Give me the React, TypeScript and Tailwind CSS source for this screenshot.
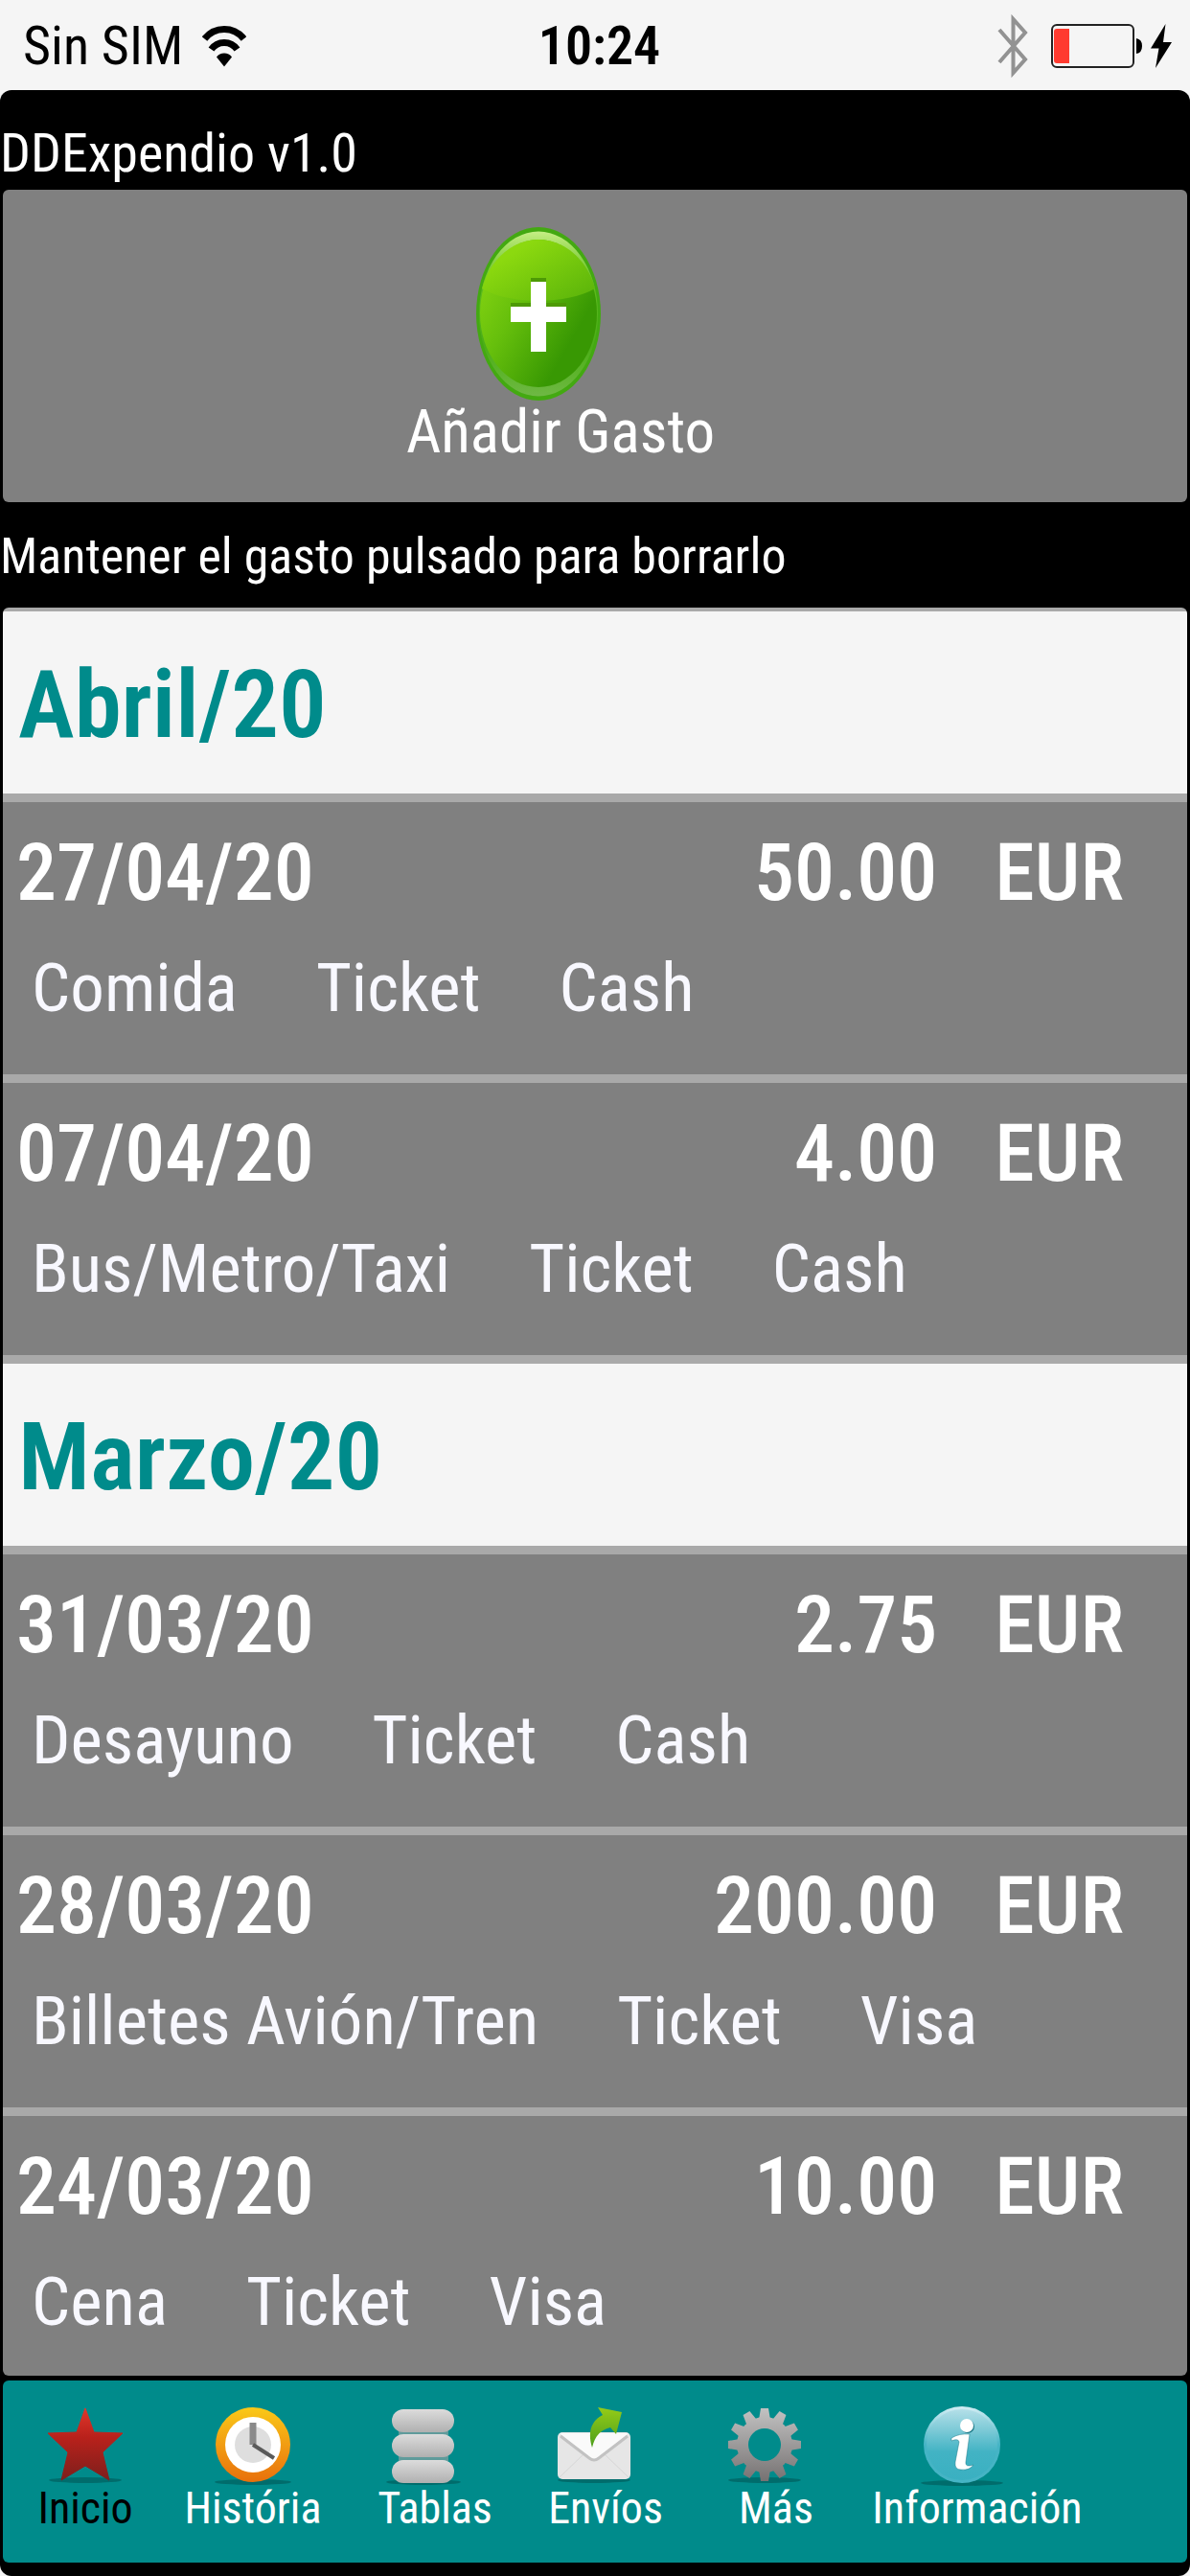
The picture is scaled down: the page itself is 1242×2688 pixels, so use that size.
import React from 'react'
import clsx from 'clsx'

type Expense = {
  date: string
  amount: string
  currency: string
  details: string[]
}

const months: { name: string; expenses: Expense[] }[] = [
  {
    name: 'Abril/20',
    expenses: [
      { date: '27/04/20', amount: '50.00', currency: 'EUR', details: ['Comida', 'Ticket', 'Cash'] },
      { date: '07/04/20', amount: '4.00', currency: 'EUR', details: ['Bus/Metro/Taxi', 'Ticket', 'Cash'] },
    ],
  },
  {
    name: 'Marzo/20',
    expenses: [
      { date: '31/03/20', amount: '2.75', currency: 'EUR', details: ['Desayuno', 'Ticket', 'Cash'] },
      { date: '28/03/20', amount: '200.00', currency: 'EUR', details: ['Billetes Avión/Tren', 'Ticket', 'Visa'] },
      { date: '24/03/20', amount: '10.00', currency: 'EUR', details: ['Cena', 'Ticket', 'Visa'] },
    ],
  },
]

const tabs = [
  { label: 'Inicio', Icon: StarIcon, active: true },
  { label: 'História', Icon: ClockIcon },
  { label: 'Tablas', Icon: DatabaseIcon, labelClass: 'pl-6' },
  { label: 'Envíos', Icon: MailIcon, labelClass: 'pl-6' },
  { label: 'Más', Icon: GearIcon, labelClass: 'pl-6' },
  { label: 'Información', Icon: InfoIcon, iconClass: 'mr-8' },
]

function WifiIcon() {
  return (
    <svg viewBox="0 0 46 44" className="h-11 w-[46px]" fill="none" stroke="#000" strokeWidth="7">
      <path d="M2.5 14.5C13 1 33 1 43.500 14.500" />
      <path d="M9.500 25.500C16 16 30 16 36.500 25.500" />
      <path d="M23 43.500L15 33.500C18.500 28 27.500 28 31 33.500Z" fill="#000" stroke="none" />
    </svg>
  )
}

function BluetoothIcon() {
  return (
    <svg viewBox="0 0 32 66" className="h-[66px] w-8" fill="none" stroke="#929292" strokeWidth="4">
      <path d="M2 16L29 47L16.500 61V5L29 19L2 50" />
    </svg>
  )
}

function BatteryIcon() {
  return (
    <svg viewBox="0 0 96 46" className="h-[46px] w-24">
      <rect x="1" y="1" width="85" height="44" rx="5" fill="none" stroke="#222" strokeWidth="2" />
      <path d="M6 5H19V41H6Q3 41 3 38V8Q3 5 6 5Z" fill="#ff3b30" />
      <path d="M89 15Q95 16 95 23T89 31Z" />
    </svg>
  )
}

function BoltIcon() {
  return (
    <svg viewBox="0 0 22 46" className="h-[46px] w-[22px]">
      <path d="M15.500 0L0 25.500H8.500L5 46L22 19H13Z" />
    </svg>
  )
}

function AddIcon() {
  return (
    <svg viewBox="0 0 130 181" className="mr-[46px] h-[181px] w-[130px]" aria-hidden="true">
      <defs>
        <linearGradient id="add-body" x1="0.100" y1="0.200" x2="0.850" y2="0.750">
          <stop offset="0" stopColor="#7fd010" />
          <stop offset="0.350" stopColor="#66bf0c" />
          <stop offset="0.900" stopColor="#389803" />
        </linearGradient>
        <linearGradient id="add-gloss" x1="0.200" y1="0.300" x2="1" y2="1">
          <stop offset="0" stopColor="#8cd90f" />
          <stop offset="1" stopColor="#58b20a" />
        </linearGradient>
        <linearGradient id="add-rim" x1="0" y1="0" x2="0" y2="1">
          <stop offset="0" stopColor="#c6ee86" />
          <stop offset="0.350" stopColor="#8ad834" stopOpacity="0.400" />
          <stop offset="0.700" stopColor="#6cbd36" stopOpacity="0.200" />
          <stop offset="1" stopColor="#6fb845" />
        </linearGradient>
      </defs>
      <ellipse cx="65" cy="90.500" rx="65" ry="90.500" fill="#43a911" />
      <ellipse cx="65" cy="90.500" rx="62" ry="86" fill="url(#add-rim)" />
      <ellipse cx="65" cy="90" rx="61" ry="77" fill="url(#add-body)" />
      <path d="M6 64C14 34 38 13 65 13S116 34 124 64C96 81 34 81 6 64Z" fill="url(#add-gloss)" />
      <path d="M57 53H73V79H94V83H36V79H57Z" fill="#4d9a05" />
      <path d="M57 57H73V83H94V99H73V130H57V99H36V83H57Z" fill="#fff" />
    </svg>
  )
}

function IconShadow() {
  return <ellipse cx="40" cy="77" rx="38" ry="3" fill="#005f60" opacity="0.700" />
}

function StarIcon() {
  return (
    <>
      <defs>
        <linearGradient id="star" x1="0" y1="0" x2="0" y2="1">
          <stop offset="0" stopColor="#e0372a" />
          <stop offset="0.400" stopColor="#b9211b" />
          <stop offset="1" stopColor="#7d1f1c" />
        </linearGradient>
      </defs>
      <IconShadow />
      <path
        d="M40 2L49 27L79 28L58 48L65 77L40 62L15 77L22 48L1 28L31 27Z"
        fill="url(#star)"
        stroke="url(#star)"
        strokeLinejoin="round"
      />
    </>
  )
}

function ClockIcon() {
  return (
    <>
      <defs>
        <linearGradient id="clock" x1="0" y1="0" x2="0" y2="1">
          <stop offset="0" stopColor="#fac918" />
          <stop offset="1" stopColor="#e8700c" />
        </linearGradient>
      </defs>
      <ellipse cx="40" cy="79" rx="40" ry="3" fill="#005f60" opacity="0.700" />
      <circle cx="40" cy="40" r="39" fill="url(#clock)" />
      <circle cx="40" cy="40" r="29" fill="#fff" />
      <circle cx="40" cy="40" r="19" fill="#dedede" />
      <path d="M40 17V40" stroke="#8a8a8a" strokeWidth="7" />
      <path d="M40 40L62 54" stroke="#5a5a5a" strokeWidth="4" />
    </>
  )
}

function DatabaseIcon() {
  return (
    <>
      <defs>
        <linearGradient id="disk" x1="0" y1="0" x2="0" y2="1">
          <stop offset="0" stopColor="#dcdcdc" />
          <stop offset="1" stopColor="#b0b0b0" />
        </linearGradient>
      </defs>
      <ellipse cx="40" cy="79" rx="39" ry="3" fill="#005f60" opacity="0.700" />
      <path d="M14 26H66V30H14ZM14 52H66V57H14Z" fill="#5f9b9b" />
      <rect x="7" y="3" width="65" height="24" rx="12" fill="url(#disk)" />
      <rect x="7" y="29" width="65" height="24" rx="12" fill="url(#disk)" />
      <rect x="7" y="56" width="65" height="24" rx="12" fill="url(#disk)" />
    </>
  )
}

function MailIcon() {
  return (
    <>
      <defs>
        <linearGradient id="arrow" x1="0" y1="0" x2="0" y2="1">
          <stop offset="0" stopColor="#96cc17" />
          <stop offset="1" stopColor="#4c9e1d" />
        </linearGradient>
      </defs>
      <IconShadow />
      <rect x="2" y="27" width="76" height="49" rx="5" fill="#e6e6e6" />
      <path d="M4 74L30 49M76 74L50 49" stroke="#d6d6d6" />
      <path d="M4 28H76L44 54Q40 57 36 54Z" fill="#fafafa" />
      <path d="M5 31L35 54Q40 58 45 54L75 31" fill="none" stroke="#c2c2c2" strokeWidth="3" />
      <path d="M38 43C33 27 37 15 49 9L44 1L69 6L63 29L57 22C46 25 41 31 38 43Z" fill="url(#arrow)" />
    </>
  )
}

function GearIcon() {
  const teeth = Array.from({ length: 12 }, (_, i) => i * 30)
  return (
    <>
      <defs>
        <linearGradient id="gear" x1="0" y1="0" x2="0" y2="1">
          <stop offset="0" stopColor="#c4c4c4" />
          <stop offset="1" stopColor="#747070" />
        </linearGradient>
        <mask id="gear-shape">
          <circle cx="40" cy="40" r="29" fill="#fff" />
          {teeth.map((angle) => (
            <path key={angle} d="M34 14L36 2H44L46 14Z" fill="#fff" transform={`rotate(${angle} 40 40)`} />
          ))}
          <circle cx="40" cy="40" r="17" fill="#000" />
        </mask>
      </defs>
      <IconShadow />
      <circle cx="40" cy="40" r="17" fill="#008b8b" />
      <rect width="80" height="80" fill="url(#gear)" mask="url(#gear-shape)" />
    </>
  )
}

function InfoIcon() {
  return (
    <>
      <defs>
        <linearGradient id="info" x1="0" y1="0" x2="0" y2="1">
          <stop offset="0" stopColor="#b4dfe8" />
          <stop offset="0.600" stopColor="#42b3c4" />
          <stop offset="1" stopColor="#3ab0c1" />
        </linearGradient>
        <linearGradient id="info-rim" x1="0" y1="0" x2="0" y2="1">
          <stop offset="0" stopColor="#d5eef5" />
          <stop offset="0.500" stopColor="#45b4c5" />
        </linearGradient>
      </defs>
      <ellipse cx="40" cy="80" rx="43" ry="3" fill="#005f60" opacity="0.700" />
      <circle cx="40" cy="40" r="40" fill="url(#info-rim)" />
      <circle cx="40" cy="40" r="37" fill="url(#info)" />
      <circle cx="46" cy="21" r="7" fill="#1b7886" />
      <circle cx="45" cy="20" r="7" fill="#fff" />
      <path
        d="M29 33Q37 28 48 29L44 58Q43 64 52 61Q48 67 39 66Q32 66 33 58L37 37Q36 33 29 36Z"
        fill="#fff"
        stroke="#1b7886"
        strokeWidth="0.500"
      />
    </>
  )
}

function StatusBar() {
  return (
    <header className="grid h-[94px] grid-cols-[1fr_auto_1fr] items-center pl-6 pr-[19px] pt-[2px] text-[56px] leading-16 text-black">
      <div className="flex items-center gap-5">
        <span>Sin SIM</span>
        <WifiIcon />
      </div>
      <span className="pl-1 font-semibold">10:24</span>
      <div className="flex items-center justify-end">
        <BluetoothIcon />
        <span className="ml-6 mr-2">
          <BatteryIcon />
        </span>
        <BoltIcon />
      </div>
    </header>
  )
}

function ExpenseRow({ expense }: { expense: Expense }) {
  return (
    <li className="h-[293px] border-t-[9px] border-[#a9a9a9] bg-[#808080] pt-[26px]">
      <div className="flex pl-[14px] pr-[66px] text-[84px] font-medium leading-24">
        <span>{expense.date}</span>
        <span className="ml-auto">{expense.amount}</span>
        <span className="ml-[60px]">{expense.currency}</span>
      </div>
      <div className="mt-6 flex gap-[82px] pl-[30px] text-[71px] leading-24 text-[#f8f8ff]">
        {expense.details.map((detail) => (
          <span key={detail}>{detail}</span>
        ))}
      </div>
    </li>
  )
}

export default function App() {
  return (
    <div className="flex h-screen flex-col bg-[#f5f5f5] font-['Roboto_Condensed','Roboto','Liberation_Sans',sans-serif]">
      <StatusBar />

      <main className="flex min-h-0 flex-1 flex-col rounded-xl bg-black pb-[14px] text-white">
        <h1 className="pb-[6px] pt-[34px] text-[56px] leading-16">DDExpendio v1.0</h1>

        <button
          type="button"
          className="mx-[3px] flex flex-col items-center rounded-md bg-[#808080] pb-10 pl-0 pr-[72px] pt-[39px] text-[63px] leading-[66px]"
        >
          <AddIcon />
          Añadir Gasto
        </button>

        <p className="pb-[21px] pt-[25px] text-[52px] leading-16">Mantener el gasto pulsado para borrarlo</p>

        <div className="mx-[3px] min-h-0 flex-1 overflow-y-auto rounded-md bg-[#808080] [scrollbar-width:none]">
          {months.map((month, idx) => (
            <section key={month.name}>
              <h2
                className={clsx(
                  'border-[#a9a9a9] bg-[#f5f5f5] pl-4 pt-1 text-[99px] font-semibold leading-[186px] text-[#008b8b]',
                  idx === 0 ? 'border-t-4' : 'border-t-[9px]'
                )}
              >
                {month.name}
              </h2>
              <ul>
                {month.expenses.map((expense) => (
                  <ExpenseRow key={expense.date} expense={expense} />
                ))}
              </ul>
            </section>
          ))}
        </div>

        <nav className="mx-[3px] mt-[5px] grid grid-cols-[172fr_repeat(4,178fr)_266fr_86fr] rounded-md bg-[#008b8b] pb-[31px] pt-[27px]">
          {tabs.map(({ label, Icon, active, iconClass, labelClass }) => (
            <button
              key={label}
              type="button"
              className={clsx(
                'flex flex-col items-center text-[46px] leading-[52px]',
                active ? 'text-black' : 'text-white'
              )}
            >
              <svg viewBox="0 0 80 80" className={clsx('size-20 overflow-visible', iconClass)} aria-hidden="true">
                <Icon />
              </svg>
              <span className={labelClass}>{label}</span>
            </button>
          ))}
        </nav>
      </main>
    </div>
  )
}
